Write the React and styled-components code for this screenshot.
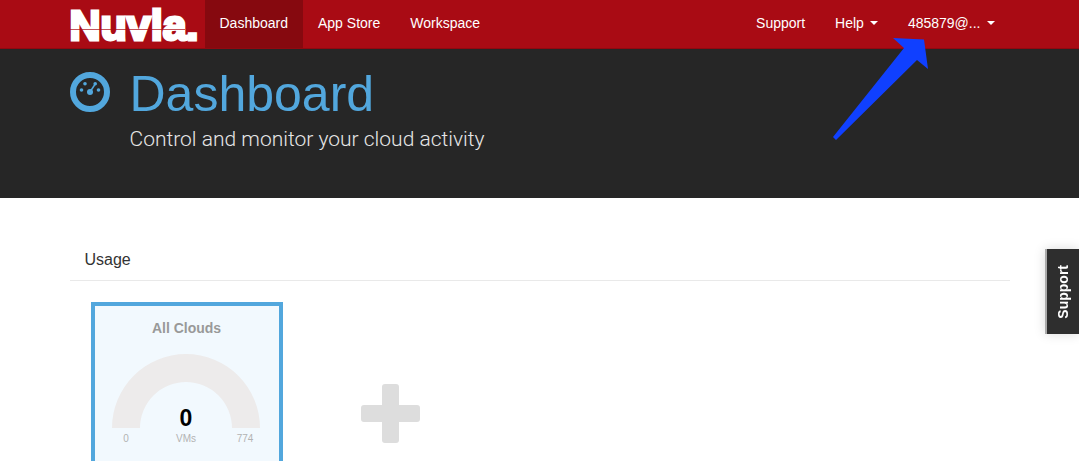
import React from "react";
import styled, { createGlobalStyle, css } from "styled-components";

const GlobalStyle = createGlobalStyle`
  *, *::before, *::after { box-sizing: border-box; }
  body {
    margin: 0;
    background: #fff;
    color: #333;
    font-family: "Liberation Sans", Helvetica, Arial, sans-serif;
    font-size: 14px;
    line-height: 20px;
  }
`;

const Page = styled.div`
  position: relative;
  height: 100vh;
  overflow: hidden;
`;

const Container = styled.div`
  position: relative;
  max-width: 940px;
  margin: 0 auto;
`;

const Navbar = styled.header`
  background: #a90b14;
  border-bottom: 1px solid #900910;
`;

const NavRow = styled(Container)`
  display: flex;
  height: 48px;
`;

const Brand = styled.a`
  position: relative;
  width: 135px;
  color: #fff;
  font-size: 43px;
  font-weight: 700;
  line-height: 50px;
  text-decoration: none;
  -webkit-text-stroke: 3px #fff;

  &::after {
    content: "";
    position: absolute;
    left: 0;
    right: 20px;
    top: 29px;
    height: 1px;
    background: rgba(169, 11, 20, 0.7);
  }
`;

const NavGroup = styled.nav`
  display: flex;
  margin-left: ${(p) => (p.$end ? "auto" : "0")};
`;

const navItem = css`
  display: flex;
  align-items: center;
  height: 48px;
  padding: 0 15px 2px;
  border: 0;
  background: ${(p) => (p.$active ? "#86090f" : "transparent")};
  color: #fff;
  font: inherit;
  text-decoration: none;
  white-space: nowrap;
`;

const NavLink = styled.a`
  ${navItem}
`;

const NavButton = styled.button`
  ${navItem}
  gap: 6px;
  cursor: pointer;

  &::after {
    content: "";
    border: 4px solid transparent;
    border-top-color: #fff;
    border-bottom: 0;
  }
`;

const Hero = styled.section`
  height: 149px;
  background: #262626;
`;

const HeroRow = styled(Container)`
  display: flex;
  gap: 20px;
  padding-top: 15px;
`;

const HeroIcon = styled.svg`
  flex: none;
  width: 40px;
  height: 40px;
  margin-top: 8px;
`;

const Title = styled.h1`
  margin: 0;
  color: #52a7dd;
  font-size: 50px;
  font-weight: 400;
  line-height: 60px;
`;

const Subtitle = styled.p`
  margin: 0;
  color: #e6e6e6;
  font-family: Roboto, "Liberation Sans", sans-serif;
  font-size: 21px;
  font-weight: 300;
  line-height: 30px;
`;

const Pointer = styled.svg`
  position: absolute;
  top: 36px;
  right: 78px;
  width: 100px;
  height: 106px;
  z-index: 1;
  pointer-events: none;
`;

const SectionTitle = styled.h2`
  margin: 42px 0 0;
  padding: 5px 15px;
  height: 41px;
  border-bottom: 1px solid #e9e9e9;
  color: #333;
  font-size: 16px;
  font-weight: 400;
  line-height: 30px;
`;

const Gauges = styled.div`
  display: flex;
  align-items: flex-start;
  gap: 78px;
  padding: 21px;
`;

const Card = styled.article`
  width: 192px;
  padding: 12px 0 16px;
  border: 4px solid #52a7dd;
  background: #f2f9fe;
  text-align: center;
`;

const CardTitle = styled.h3`
  margin: 0;
  color: #999;
  font-size: 14px;
  line-height: 20px;
`;

const Chart = styled.svg`
  display: block;
  width: 148px;
  height: 94px;
  margin: 16px auto 0 17px;
  font-family: "Liberation Sans", Arial, sans-serif;
  text-anchor: middle;
`;

const Value = styled.text`
  fill: #000;
  font-size: 23px;
  font-weight: 700;
`;

const Caption = styled.text`
  fill: #b3b3b3;
  font-size: 10px;
`;

const AddButton = styled.button`
  width: 59px;
  height: 59px;
  margin-top: 82px;
  padding: 0;
  border: 0;
  background: none;
  cursor: pointer;

  svg { display: block; }
`;

const SupportTab = styled.button`
  position: fixed;
  top: 249px;
  right: 0;
  display: flex;
  align-items: center;
  justify-content: center;
  width: 34px;
  height: 85px;
  padding: 0;
  border: 0;
  border-left: 2px solid #aaa;
  background: #2e2e2e;
  box-shadow: 0 0 12px rgba(0, 0, 0, 0.15);
  color: #fff;
  font: inherit;
  font-weight: 700;
  cursor: pointer;

  span {
    writing-mode: vertical-rl;
    transform: rotate(180deg);
  }
`;

function Gauge({ title, value, max, unit }) {
  return (
    <Card>
      <CardTitle>{title}</CardTitle>
      <Chart viewBox="0 0 148 94" role="img" aria-label={`${title}: ${value} ${unit}`}>
        <path d="M0 74a74 74 0 0 1 148 0h-28a46 46 0 0 0-92 0z" fill="#edebeb" />
        <Value x="74" y="72">{value}</Value>
        <Caption x="14" y="88">0</Caption>
        <Caption x="74" y="88">{unit}</Caption>
        <Caption x="133" y="88">{max}</Caption>
      </Chart>
    </Card>
  );
}

export default function App() {
  return (
    <Page>
      <GlobalStyle />
      <Navbar>
        <NavRow>
          <Brand href="#">Nuvla.</Brand>
          <NavGroup>
            <NavLink href="#dashboard" $active>Dashboard</NavLink>
            <NavLink href="#appstore">App Store</NavLink>
            <NavLink href="#workspace">Workspace</NavLink>
          </NavGroup>
          <NavGroup $end>
            <NavLink href="#support">Support</NavLink>
            <NavButton type="button">Help</NavButton>
            <NavButton type="button">485879@...</NavButton>
          </NavGroup>
          <Pointer viewBox="0 0 100 106" aria-hidden="true">
            <path d="M61 2 92 3.500 96 33 85 24 4 104 1 101 72 12z" fill="#1040ff" />
          </Pointer>
        </NavRow>
      </Navbar>
      <Hero>
        <HeroRow>
          <HeroIcon viewBox="0 0 40 40" aria-hidden="true">
            <circle cx="20" cy="20" r="17" fill="none" stroke="#52a7dd" strokeWidth="6" />
            <g fill="#52a7dd">
              <circle cx="11.500" cy="18" r="1.800" />
              <circle cx="15" cy="11.800" r="1.800" />
              <circle cx="25.200" cy="11.800" r="1.800" />
              <circle cx="28.500" cy="18" r="1.800" />
              <circle cx="20" cy="20" r="3" />
            </g>
            <path d="M20 20 25.200 12" stroke="#52a7dd" strokeWidth="1.500" />
          </HeroIcon>
          <div>
            <Title>Dashboard</Title>
            <Subtitle>Control and monitor your cloud activity</Subtitle>
          </div>
        </HeroRow>
      </Hero>
      <Container as="main">
        <SectionTitle>Usage</SectionTitle>
        <Gauges>
          <Gauge title="All Clouds" value={0} max={774} unit="VMs" />
          <AddButton type="button" aria-label="Add gauge">
            <svg width="59" height="59" viewBox="0 0 59 59">
              <path
                d="M24 0h11a3 3 0 0 1 3 3v18h18a3 3 0 0 1 3 3v11a3 3 0 0 1-3 3H38v18a3 3 0 0 1-3 3H24a3 3 0 0 1-3-3V38H3a3 3 0 0 1-3-3V24a3 3 0 0 1 3-3h18V3a3 3 0 0 1 3-3z"
                fill="#ddd"
              />
            </svg>
          </AddButton>
        </Gauges>
      </Container>
      <SupportTab type="button"><span>Support</span></SupportTab>
    </Page>
  );
}
